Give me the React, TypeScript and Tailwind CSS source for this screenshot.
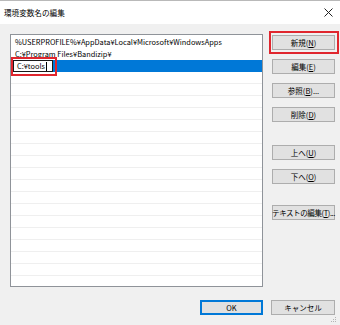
import React from 'react';

const font = { fontFamily: '"Noto Sans CJK JP", "Noto Sans", sans-serif' };

const paths = [
  '%USERPROFILE%¥AppData¥Local¥Microsoft¥WindowsApps',
  'C:¥Program Files¥Bandizip¥',
];

function Btn({ label, mn, suffix = '', className = '' }: { label: string; mn: string; suffix?: string; className?: string }) {
  return (
    <div
      className={`flex h-[15px] w-[63px] items-center justify-center whitespace-nowrap border border-[#adadad] bg-[#e1e1e1] text-[7.5px] leading-none text-black ${className}`}
    >
      <span>
        {label}(<span className="underline">{mn}</span>){suffix}
      </span>
    </div>
  );
}

export default function App() {
  const emptyRows = Array.from({ length: 20 });

  return (
    <div className="relative h-[325px] w-[340px] overflow-hidden bg-[#f0f0f0]" style={font}>
      {/* title bar */}
      <div className="flex h-[24px] items-center justify-between border-t border-[#b9b9b9] bg-white pl-[4px] pr-[6px]">
        <span className="text-[7.6px] text-black">環境変数名の編集</span>
        <svg width="9" height="9" viewBox="0 0 9 9" className="mr-[1px]">
          <path d="M0.5 0.5 L8.5 8.5 M8.5 0.5 L0.5 8.5" stroke="#222" strokeWidth="1" fill="none" />
        </svg>
      </div>

      <div className="flex pl-[10px] pt-[10px]">
        {/* list */}
        <div className="h-[253px] w-[253px] overflow-hidden border border-[#8f9399] bg-white pt-[1px]">
          {paths.map((p) => (
            <div key={p} className="flex h-[12px] items-center whitespace-nowrap pl-[4px] text-[7.4px] leading-none text-black">
              {p}
            </div>
          ))}
          <div className="flex h-[12px] items-center bg-[#0078d7] pl-[2px]">
            <div className="flex h-[12px] w-[40px] items-center border border-[#1a1a1a] bg-white pl-[3px] text-[7.4px] leading-none text-black">
              C:¥tools
              <span className="ml-[1px] h-[9px] w-px bg-black" />
            </div>
          </div>
          {emptyRows.map((_, i) => (
            <div key={i} className="h-[12px] border-b border-[#efefef]" />
          ))}
        </div>

        {/* buttons */}
        <div className="ml-[9px] flex flex-col pt-[1px]">
          <Btn label="新規" mn="N" />
          <Btn label="編集" mn="E" className="mt-[9px]" />
          <Btn label="参照" mn="B" suffix="..." className="mt-[9px]" />
          <Btn label="削除" mn="D" className="mt-[9px]" />
          <Btn label="上へ" mn="U" className="mt-[23px]" />
          <Btn label="下へ" mn="O" className="mt-[9px]" />
          <Btn label="テキストの編集" mn="T" suffix="..." className="mt-[21px] tracking-[-0.4px]" />
        </div>
      </div>

      {/* bottom buttons */}
      <div className="flex justify-end gap-[8px] pr-[5px] pt-[13px]">
        <div className="flex h-[15px] w-[63px] items-center justify-center border-2 border-[#0078d7] bg-[#e1e1e1] text-[7.5px] leading-none text-black">
          OK
        </div>
        <div className="flex h-[15px] w-[64px] items-center justify-center border border-[#adadad] bg-[#e1e1e1] text-[7.5px] leading-none text-black">
          キャンセル
        </div>
      </div>

      {/* resize grip */}
      <svg width="7" height="7" viewBox="0 0 7 7" className="absolute bottom-[2px] right-[3px]">
        {[
          [5, 1],
          [3, 3],
          [5, 3],
          [1, 5],
          [3, 5],
          [5, 5],
        ].map(([x, y], i) => (
          <rect key={i} x={x} y={y} width="1" height="1" fill="#b4b4b4" />
        ))}
      </svg>

      {/* red annotation boxes */}
      <div className="pointer-events-none absolute left-[11px] top-[57px] h-[19px] w-[46px] border-2 border-[#e0262e]" />
      <div className="pointer-events-none absolute left-[269px] top-[31px] h-[23px] w-[70px] border-2 border-[#e0262e]" />
    </div>
  );
}
